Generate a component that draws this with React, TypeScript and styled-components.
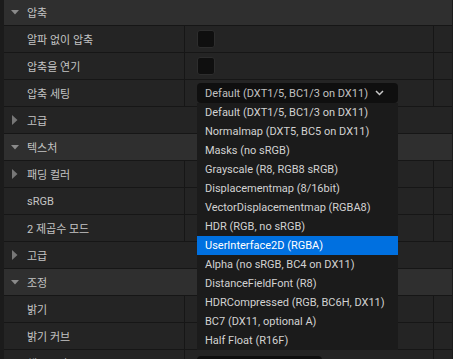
import React from "react";
import styled, { createGlobalStyle } from "styled-components";

const Global = createGlobalStyle`
  html, body { margin: 0; padding: 0; background: #1b1b1b; overflow: hidden; }
  body { font-family: Roboto, "Noto Sans CJK KR", sans-serif; font-size: 11px; }
`;

const Panel = styled.div`
  position: relative;
  width: 453px;
  height: 359px;
  overflow: hidden;
  background: #1b1b1b;
  padding-left: 4px;
  padding-right: 1px;
  box-sizing: border-box;
`;

const List = styled.div`
  display: flex;
  flex-direction: column;
  gap: 1px;
  margin-top: -1px;
  background: #161616;
`;

const Row = styled.div<{ $kind: "header" | "prop" | "plain" }>`
  display: grid;
  grid-template-columns: ${(p) => (p.$kind === "prop" ? "180px 248px 18px" : "1fr")};
  gap: 1px;
  height: 26px;
  background: #161616;
`;

const Cell = styled.div<{ $header?: boolean }>`
  display: flex;
  align-items: center;
  background: ${(p) => (p.$header ? "#2f2f2f" : "#242424")};
  color: #c4c4c4;
  min-width: 0;
`;

const NameCell = styled(Cell)`
  padding-left: 6px;
  gap: 6px;
`;

const Label = styled.span<{ $indent?: boolean }>`
  padding-left: ${(p) => (p.$indent ? "17px" : "0")};
  white-space: nowrap;
`;

const ValueCell = styled(Cell)`
  padding-left: 12px;
`;

const Arrow = styled.svg`
  flex: none;
  width: 11px;
  height: 10px;
`;

const Check = styled.div`
  width: 16px;
  height: 16px;
  border-radius: 3px;
  background: #0f0f0f;
  border: 1px solid #2d2d2d;
`;

const Combo = styled.div`
  width: 201px;
  height: 20px;
  box-sizing: border-box;
  border-radius: 4px;
  background: #0f0f0f;
  display: flex;
  align-items: center;
  justify-content: space-between;
  padding: 0 14px 0 8px;
  color: #c0c0c0;
  white-space: nowrap;
`;

const NumBox = styled.div`
  width: 125px;
  height: 20px;
  margin-top: 6px;
  align-self: flex-start;
  box-sizing: border-box;
  border-radius: 4px;
  background: #0f0f0f;
  padding: 2px 9px;
  color: #c0c0c0;
`;

const Menu = styled.div`
  position: absolute;
  left: 197px;
  top: 103px;
  width: 201px;
  background: #1b1b1b;
  display: flex;
  flex-direction: column;
`;

const Item = styled.div<{ $active?: boolean }>`
  height: 19px;
  display: flex;
  align-items: center;
  padding-left: 8px;
  color: ${(p) => (p.$active ? "#ffffff" : "#d2d2d2")};
  background: ${(p) => (p.$active ? "#0070e0" : "transparent")};
  white-space: nowrap;
`;

const Down = () => (
  <Arrow viewBox="0 0 11 10">
    <polygon points="1,3 9,3 5,7.5" fill="#8a8a8a" />
  </Arrow>
);
const Right = () => (
  <Arrow viewBox="0 0 11 10">
    <polygon points="2,0 7.5,5 2,10" fill="#777777" />
  </Arrow>
);

const Chevron = () => (
  <svg width="9" height="6" viewBox="0 0 9 6">
    <path d="M1 1 L4.5 4.5 L8 1" fill="none" stroke="#c8c8c8" strokeWidth="1.5" />
  </svg>
);

type R =
  | { kind: "header"; label: string }
  | { kind: "plain"; label: string }
  | { kind: "prop"; label: string; expander?: boolean; value?: "check" | "combo" | "num" };

const rows: R[] = [
  { kind: "header", label: "압축" },
  { kind: "prop", label: "알파 없이 압축", value: "check" },
  { kind: "prop", label: "압축을 연기", value: "check" },
  { kind: "prop", label: "압축 세팅", value: "combo" },
  { kind: "plain", label: "고급" },
  { kind: "header", label: "텍스처" },
  { kind: "prop", label: "패딩 컬러", expander: true },
  { kind: "prop", label: "sRGB" },
  { kind: "prop", label: "2 제곱수 모드" },
  { kind: "plain", label: "고급" },
  { kind: "header", label: "조정" },
  { kind: "prop", label: "밝기" },
  { kind: "prop", label: "밝기 커브" },
  { kind: "prop", label: "채도보정", value: "num" },
];

const items = [
  "Default (DXT1/5, BC1/3 on DX11)",
  "Normalmap (DXT5, BC5 on DX11)",
  "Masks (no sRGB)",
  "Grayscale (R8, RGB8 sRGB)",
  "Displacementmap (8/16bit)",
  "VectorDisplacementmap (RGBA8)",
  "HDR (RGB, no sRGB)",
  "UserInterface2D (RGBA)",
  "Alpha (no sRGB, BC4 on DX11)",
  "DistanceFieldFont (R8)",
  "HDRCompressed (RGB, BC6H, DX11)",
  "BC7 (DX11, optional A)",
  "Half Float (R16F)",
];

export default function App() {
  return (
    <Panel>
      <Global />
      <List>
        {rows.map((r, i) => {
          if (r.kind === "header")
            return (
              <Row key={i} $kind="header">
                <NameCell $header>
                  <Down />
                  <Label>{r.label}</Label>
                </NameCell>
              </Row>
            );
          if (r.kind === "plain")
            return (
              <Row key={i} $kind="plain">
                <NameCell>
                  <Right />
                  <Label>{r.label}</Label>
                </NameCell>
              </Row>
            );
          return (
            <Row key={i} $kind="prop">
              <NameCell>
                {r.expander ? <Right /> : null}
                <Label $indent={!r.expander}>{r.label}</Label>
              </NameCell>
              <ValueCell>
                {r.value === "check" && <Check />}
                {r.value === "combo" && (
                  <Combo>
                    <span>Default (DXT1/5, BC1/3 on DX11)</span>
                    <Chevron />
                  </Combo>
                )}
                {r.value === "num" && <NumBox>0.0</NumBox>}
              </ValueCell>
              <Cell />
            </Row>
          );
        })}
      </List>
      <Menu>
        {items.map((t, i) => (
          <Item key={i} $active={i === 7}>
            {t}
          </Item>
        ))}
      </Menu>
    </Panel>
  );
}
